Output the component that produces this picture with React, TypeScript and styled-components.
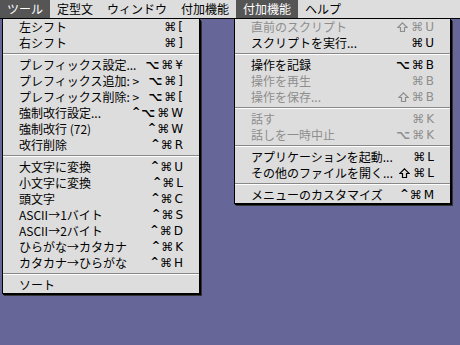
import styled, { createGlobalStyle } from "styled-components";

const GlobalStyle = createGlobalStyle`
  html, body {
    margin: 0;
    padding: 0;
    background: #666699;
  }
  body {
    width: 460px;
    height: 345px;
    overflow: hidden;
    font-family: "Noto Sans CJK JP", "DejaVu Sans", sans-serif;
    font-size: 12px;
    color: #000;
  }
`;

const Screen = styled.div`
  width: 460px;
  height: 345px;
  display: flex;
  flex-direction: column;
`;

const MenuBar = styled.div`
  display: flex;
  height: 18px;
  background: #dddddd;
  border-bottom: 1px solid #000;
`;

const Title = styled.div<{ $active?: boolean }>`
  padding: 0 7px;
  line-height: 18px;
  white-space: nowrap;
  background: ${(p) => (p.$active ? "#555555" : "transparent")};
  color: ${(p) => (p.$active ? "#fff" : "#000")};
`;

const Drops = styled.div`
  display: flex;
  align-items: flex-start;
`;

const Menu = styled.div<{ $left: number; $width: number }>`
  margin-left: ${(p) => p.$left}px;
  width: ${(p) => p.$width}px;
  box-sizing: border-box;
  background: #dddddd;
  border: 1px solid #000;
  border-top: none;
  box-shadow: 1px 1px 0 #000, 2px 2px 0 #333;
`;

const Row = styled.div<{ $disabled?: boolean }>`
  display: flex;
  justify-content: space-between;
  align-items: center;
  height: 16px;
  line-height: 16px;
  padding: 0 16px;
  white-space: nowrap;
  color: ${(p) => (p.$disabled ? "#8e8e8e" : "#000")};
`;

const Keys = styled.span`
  display: flex;
  align-items: center;
  gap: 2px;
`;

type Kind = "ctrl" | "opt" | "cmd" | "key";

const Glyph = styled.span<{ $kind: Kind }>`
  font-family: "DejaVu Sans", "Noto Sans CJK JP", sans-serif;
  font-size: ${(p) => (p.$kind === "ctrl" ? "10px" : "12px")};
  font-weight: ${(p) => (p.$kind === "opt" || p.$kind === "ctrl" ? 700 : 400)};
  line-height: 16px;
  ${(p) => p.$kind === "ctrl" && "margin-right: -1px; position: relative; top: -1px;"}
`;

const ShiftIcon = styled.svg`
  width: 11px;
  height: 10px;
  margin-right: 1px;
`;

const Shift = () => (
  <ShiftIcon viewBox="0 0 11 10">
    <path
      d="M5.5 0.8 L10.2 5.5 H7.5 V9.5 H3.5 V5.5 H0.8 Z"
      fill="none"
      stroke="currentColor"
      strokeWidth="1.2"
      strokeLinejoin="miter"
    />
  </ShiftIcon>
);

const Sep = styled.div`
  height: 6px;
  display: flex;
  flex-direction: column;
  justify-content: center;
  &::before {
    content: "";
    height: 1px;
    background: #888;
  }
  &::after {
    content: "";
    height: 1px;
    background: #fff;
  }
`;

type Item = { label: string; keys?: string; disabled?: boolean } | null;

const toolMenu: Item[] = [
  { label: "左シフト", keys: "⌘[" },
  { label: "右シフト", keys: "⌘]" },
  null,
  { label: "プレフィックス設定...", keys: "⌥⌘¥" },
  { label: "プレフィックス追加: >", keys: "⌥⌘]" },
  { label: "プレフィックス削除: >", keys: "⌥⌘[" },
  { label: "強制改行設定...", keys: "^⌥⌘W" },
  { label: "強制改行 (72)", keys: "^⌘W" },
  { label: "改行削除", keys: "^⌘R" },
  null,
  { label: "大文字に変換", keys: "^⌘U" },
  { label: "小文字に変換", keys: "^⌘L" },
  { label: "頭文字", keys: "^⌘C" },
  { label: "ASCII→1バイト", keys: "^⌘S" },
  { label: "ASCII→2バイト", keys: "^⌘D" },
  { label: "ひらがな→カタカナ", keys: "^⌘K" },
  { label: "カタカナ→ひらがな", keys: "^⌘H" },
  null,
  { label: "ソート" },
];

const extraMenu: Item[] = [
  { label: "直前のスクリプト", keys: "⇧⌘U", disabled: true },
  { label: "スクリプトを実行...", keys: "⌘U" },
  null,
  { label: "操作を記録", keys: "⌥⌘B" },
  { label: "操作を再生", keys: "⌘B", disabled: true },
  { label: "操作を保存...", keys: "⇧⌘B", disabled: true },
  null,
  { label: "話す", keys: "⌘K", disabled: true },
  { label: "話しを一時中止", keys: "⌥⌘K", disabled: true },
  null,
  { label: "アプリケーションを起動...", keys: "⌘L" },
  { label: "その他のファイルを開く...", keys: "⇧⌘L" },
  null,
  { label: "メニューのカスタマイズ", keys: "^⌘M" },
];

const kindOf = (c: string): Kind =>
  c === "^" ? "ctrl" : c === "⌥" ? "opt" : c === "⌘" ? "cmd" : "key";

const DropMenu = ({ items, left, width }: { items: Item[]; left: number; width: number }) => (
  <Menu $left={left} $width={width}>
    {items.map((it, i) =>
      it ? (
        <Row key={i} $disabled={it.disabled}>
          <span>{it.label}</span>
          {it.keys && (
            <Keys>
              {[...it.keys].map((c, j) =>
                c === "⇧" ? (
                  <Shift key={j} />
                ) : (
                  <Glyph key={j} $kind={kindOf(c)}>
                    {c}
                  </Glyph>
                )
              )}
            </Keys>
          )}
        </Row>
      ) : (
        <Sep key={i} />
      )
    )}
  </Menu>
);

export default function App() {
  return (
    <Screen>
      <GlobalStyle />
      <MenuBar>
        <Title $active>ツール</Title>
        <Title>定型文</Title>
        <Title>ウィンドウ</Title>
        <Title>付加機能</Title>
        <Title $active>付加機能</Title>
        <Title>ヘルプ</Title>
      </MenuBar>
      <Drops>
        <DropMenu items={toolMenu} left={2} width={198} />
        <DropMenu items={extraMenu} left={34} width={217} />
      </Drops>
    </Screen>
  );
}
